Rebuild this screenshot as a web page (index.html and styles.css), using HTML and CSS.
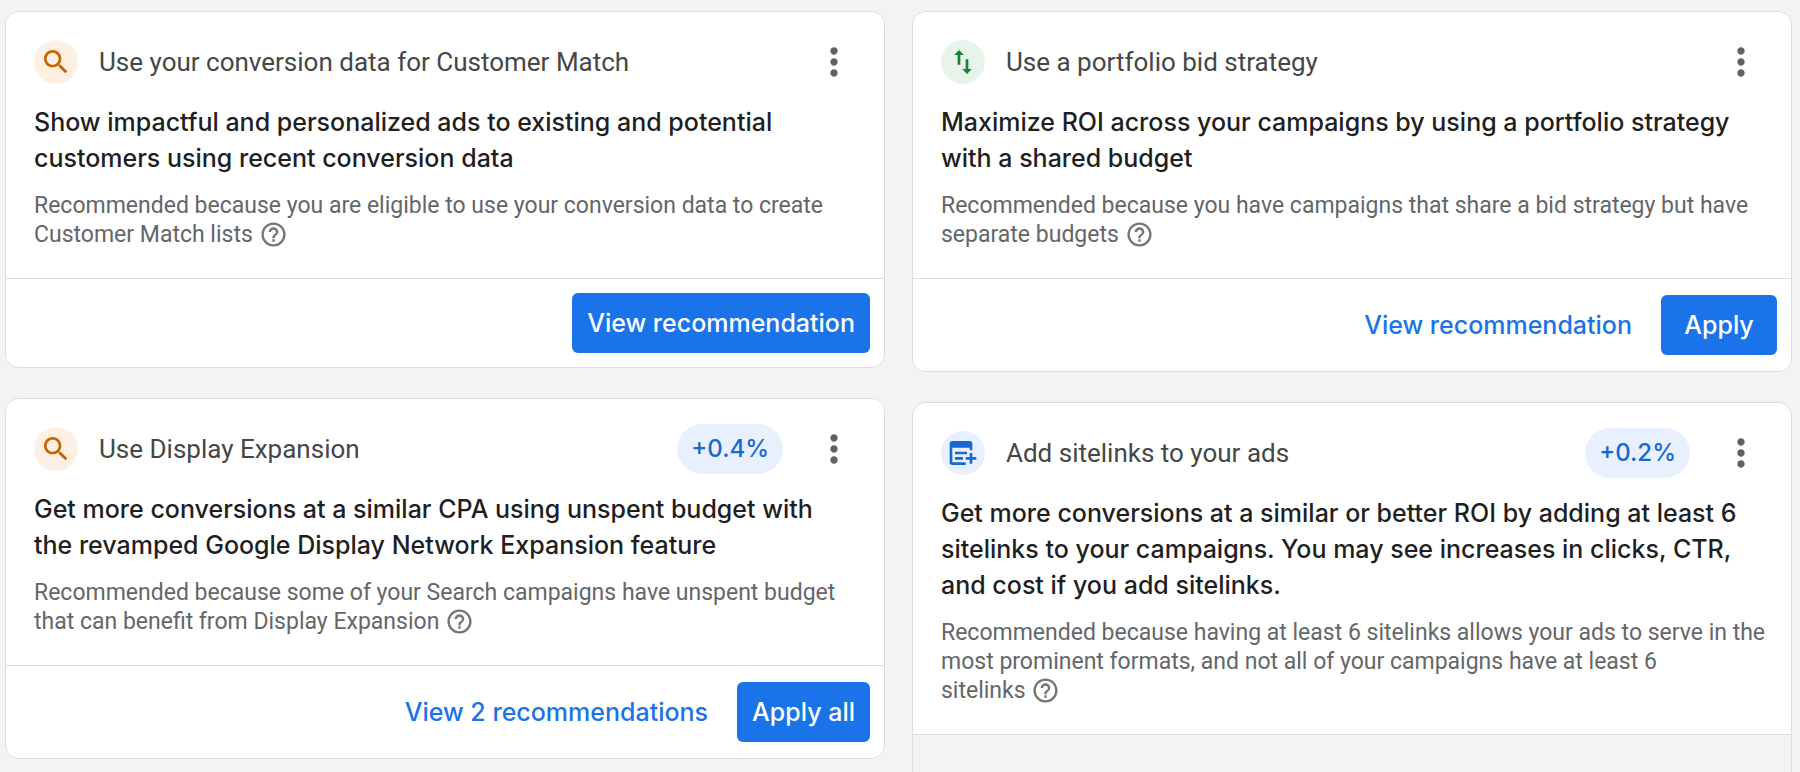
FILE: index.html
```
<!DOCTYPE html>
<html lang="en">
<head>
    <meta charset="UTF-8">
    <meta name="viewport" content="width=device-width, initial-scale=1.0">
    <title>Recommendations</title>
    <link rel="stylesheet" href="styles.css">
</head>
<body>
    <!-- Shared icons -->
    <svg class="sprite" aria-hidden="true">
        <symbol id="icon-more" viewBox="0 0 24 24">
            <path d="M12 8c1.1 0 2-.9 2-2s-.9-2-2-2-2 .9-2 2 .9 2 2 2zm0 2c-1.1 0-2 .9-2 2s.9 2 2 2 2-.9 2-2-.9-2-2-2zm0 6c-1.1 0-2 .9-2 2s.9 2 2 2 2-.9 2-2-.9-2-2-2z"/>
        </symbol>
        <symbol id="icon-search" viewBox="0 0 24 24">
            <path d="M15.5 14h-.79l-.28-.27C15.41 12.59 16 11.11 16 9.5 16 5.91 13.09 3 9.5 3S3 5.91 3 9.5 5.91 16 9.5 16c1.61 0 3.09-.59 4.23-1.57l.27.28v.79l5 4.99L20.49 19l-4.99-5zm-6 0C7.01 14 5 11.99 5 9.5S7.01 5 9.5 5 14 7.01 14 9.5 11.99 14 9.5 14z"/>
        </symbol>
        <symbol id="icon-bid" viewBox="0 0 24 24">
            <path d="M9 3L5.4 6.8H8V14h2V6.8h2.6zM16 17.2V10h-2v7.2h-2.6L15 21l3.6-3.8z"/>
        </symbol>
        <symbol id="icon-asset" viewBox="0 0 24 24">
            <path d="M4 3h13a2 2 0 0 1 2 2v5h-2V8H4v11h10v2H4a2 2 0 0 1-2-2V5a2 2 0 0 1 2-2z"/>
            <path d="M6 11h9v2H6zM6 15h6v2H6zM17 12h2v3h3v2h-3v3h-2v-3h-3v-2h3z"/>
        </symbol>
        <symbol id="icon-help" viewBox="0 0 24 24">
            <path d="M11 18h2v-2h-2v2zm1-16C6.48 2 2 6.48 2 12s4.48 10 10 10 10-4.48 10-10S17.52 2 12 2zm0 18c-4.41 0-8-3.59-8-8s3.59-8 8-8 8 3.59 8 8-3.59 8-8 8zm0-14c-2.21 0-4 1.79-4 4h2c0-1.1.9-2 2-2s2 .9 2 2c0 2-3 1.75-3 5h2c0-2.25 3-2.5 3-5 0-2.21-1.79-4-4-4z"/>
        </symbol>
    </svg>

    <main class="board">
        <div class="column">
            <article class="card">
                <div class="card-body">
                    <header class="card-header">
                        <span class="badge-icon orange"><svg><use href="#icon-search"/></svg></span>
                        <h2 class="card-title">Use your conversion data for Customer Match</h2>
                        <button class="menu-btn" type="button" aria-label="More options"><svg><use href="#icon-more"/></svg></button>
                    </header>
                    <h3 class="headline">Show impactful and personalized ads to existing and potential customers using recent conversion data</h3>
                    <p class="reason">Recommended because you are eligible to use your conversion data to create Customer Match <span class="keep">lists <button class="help-btn" type="button" aria-label="Help"><svg><use href="#icon-help"/></svg></button></span></p>
                </div>
                <footer class="card-footer compact">
                    <button class="btn primary" type="button">View recommendation</button>
                </footer>
            </article>

            <article class="card">
                <div class="card-body">
                    <header class="card-header">
                        <span class="badge-icon orange"><svg><use href="#icon-search"/></svg></span>
                        <h2 class="card-title">Use Display Expansion</h2>
                        <span class="uplift">+0.4%</span>
                        <button class="menu-btn" type="button" aria-label="More options"><svg><use href="#icon-more"/></svg></button>
                    </header>
                    <h3 class="headline">Get more conversions at a similar CPA using unspent budget with the revamped Google Display Network Expansion feature</h3>
                    <p class="reason">Recommended because some of your Search campaigns have unspent budget that can benefit from Display <span class="keep">Expansion <button class="help-btn" type="button" aria-label="Help"><svg><use href="#icon-help"/></svg></button></span></p>
                </div>
                <footer class="card-footer">
                    <button class="btn" type="button">View 2 recommendations</button>
                    <button class="btn primary" type="button">Apply all</button>
                </footer>
            </article>
        </div>

        <div class="column">
            <article class="card">
                <div class="card-body">
                    <header class="card-header">
                        <span class="badge-icon green"><svg><use href="#icon-bid"/></svg></span>
                        <h2 class="card-title">Use a portfolio bid strategy</h2>
                        <button class="menu-btn" type="button" aria-label="More options"><svg><use href="#icon-more"/></svg></button>
                    </header>
                    <h3 class="headline">Maximize ROI across your campaigns by using a portfolio strategy with a shared budget</h3>
                    <p class="reason">Recommended because you have campaigns that share a bid strategy but have separate <span class="keep">budgets <button class="help-btn" type="button" aria-label="Help"><svg><use href="#icon-help"/></svg></button></span></p>
                </div>
                <footer class="card-footer">
                    <button class="btn" type="button">View recommendation</button>
                    <button class="btn primary" type="button">Apply</button>
                </footer>
            </article>

            <article class="card">
                <div class="card-body">
                    <header class="card-header">
                        <span class="badge-icon blue"><svg><use href="#icon-asset"/></svg></span>
                        <h2 class="card-title">Add sitelinks to your ads</h2>
                        <span class="uplift">+0.2%</span>
                        <button class="menu-btn" type="button" aria-label="More options"><svg><use href="#icon-more"/></svg></button>
                    </header>
                    <h3 class="headline">Get more conversions at a similar or better ROI by adding at least 6 sitelinks to your campaigns. You may see increases in clicks, CTR, and cost if you add sitelinks.</h3>
                    <p class="reason">Recommended because having at least 6 sitelinks allows your ads to serve in the most prominent formats, and not all of your campaigns have at least 6 <span class="keep">sitelinks <button class="help-btn" type="button" aria-label="Help"><svg><use href="#icon-help"/></svg></button></span></p>
                </div>
                <div class="card-preview"></div>
            </article>
        </div>
    </main>
</body>
</html>
```
FILE: styles.css
```
* {
    box-sizing: border-box;
}
body {
    height: 100vh;
    margin: 0;
    overflow: hidden;
    background-color: #f1f3f4;
    color: #1f1f1f;
    font-family: Roboto, sans-serif;
}
h2, h3, p {
    margin: 0;
}
button {
    border: none;
    background: none;
    cursor: pointer;
}
svg {
    display: block;
    fill: currentColor;
}
.sprite {
    display: none;
}
.board {
    display: grid;
    grid-template-columns: 1fr 1fr;
    align-items: start;
    gap: 27px;
    padding: 11px 8px 0 5px;
}
.column {
    display: flex;
    flex-direction: column;
    gap: 30px;
}
.card {
    overflow: hidden;
    border: 1px solid #dadce0;
    border-radius: 14px;
}
.card-body {
    padding: 25px 20px 29px 28px;
    background: #fff;
}
.card-header {
    display: flex;
    align-items: center;
    height: 50px;
    margin-bottom: 17px;
    padding-right: 8px;
}
.badge-icon {
    display: flex;
    align-items: center;
    justify-content: center;
    width: 44px;
    height: 44px;
    margin-right: 21px;
    border-radius: 50%;
}
.badge-icon svg {
    width: 32px;
    height: 32px;
}
.orange {
    background: #feefe3;
    color: #c26401;
}
.green {
    background: #e6f4ea;
    color: #188038;
}
.blue {
    background: #e8f0fe;
    color: #1967d2;
}
.card-title {
    flex: 1;
    color: #444746;
    font-size: 26px;
    font-weight: 400;
    line-height: 36px;
}
.uplift {
    padding: 0 14px;
    margin-right: 29px;
    border-radius: 25px;
    background: #e8f0fe;
    color: #1967d2;
    font-family: Inter, sans-serif;
    font-size: 24px;
    font-weight: 500;
    line-height: 50px;
}
.menu-btn {
    padding: 0;
    color: #616161;
}
.menu-btn svg {
    width: 44px;
    height: 44px;
}
.headline {
    margin-bottom: 15px;
    padding-right: 16px;
    font-family: Inter, sans-serif;
    font-size: 25px;
    font-weight: 500;
    line-height: 36px;
}
.reason {
    color: #646668;
    font-size: 23px;
    line-height: 29px;
}
.keep {
    white-space: nowrap;
}
.help-btn {
    padding: 0;
    color: #757575;
    line-height: 0;
    vertical-align: top;
}
.help-btn svg {
    width: 29px;
    height: 29px;
}
.card-footer {
    display: flex;
    justify-content: flex-end;
    gap: 14px;
    padding: 16px 14px;
    border-top: 1px solid #dadce0;
    background: #fff;
}
.compact {
    padding: 14px;
}
.btn {
    height: 60px;
    padding: 0 15px;
    border-radius: 6px;
    color: #1a73e8;
    font-family: Inter, sans-serif;
    font-size: 25px;
    font-weight: 500;
}
.primary {
    min-width: 116px;
    background: #1a73e8;
    color: #fff;
}
.card-preview {
    height: 120px;
    border-top: 1px solid #dadce0;
}
```
